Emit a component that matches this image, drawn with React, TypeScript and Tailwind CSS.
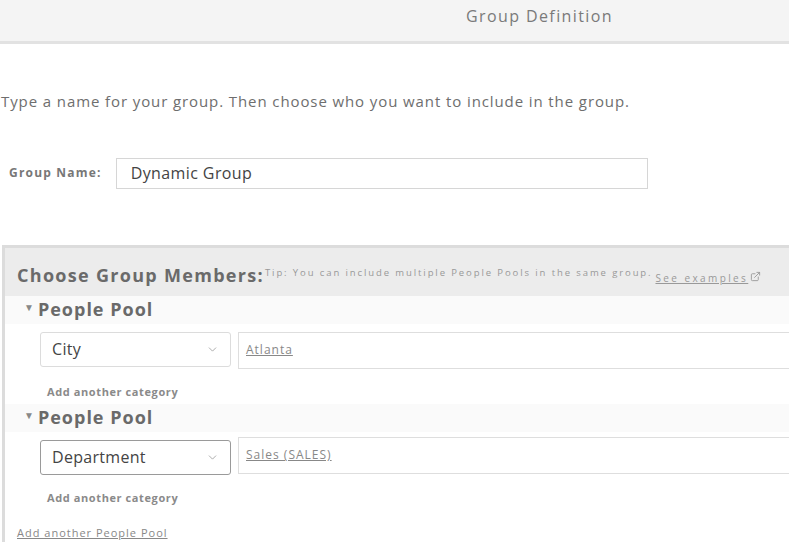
import { ChevronDown, ExternalLink } from 'lucide-react';

function PoolRow({ category, value, focused }: { category: string; value: string; focused?: boolean }) {
  return (
    <div>
      <div className="flex items-center h-[28px] pl-[19px] bg-[#fafafa]">
        <span className="text-[10px] text-[#888] mr-[4px] mt-[-4px]">▼</span>
        <span className="text-[18px] font-bold text-[#6a6a6a] tracking-[1px]">People Pool</span>
      </div>
      <div className="flex items-start bg-white pt-[8px]">
        <div
          className={`ml-[35px] w-[191px] h-[35px] flex items-center justify-between px-[11px] bg-white rounded-[3px] border ${
            focused ? 'border-[#9a9a9a]' : 'border-[#dcdcdc]'
          }`}
        >
          <span className="text-[16px] text-[#444] tracking-[0.3px]">{category}</span>
          <ChevronDown className="w-[13px] h-[13px] text-[#999]" strokeWidth={1.5} />
        </div>
        <div className={`ml-[7px] flex-1 h-[37px] flex items-center pl-[7px] border border-r-0 border-[#dedede] bg-white ${focused ? 'mt-[-3px]' : ''}`}>
          <span className="text-[12px] text-[#888] underline tracking-[1px]">{value}</span>
        </div>
      </div>
      <div className="bg-white pl-[42px] h-[35px] flex items-end pb-[3px]">
        <span className="text-[11px] font-bold text-[#8a8a8a] tracking-[0.6px]">Add another category</span>
      </div>
    </div>
  );
}

export default function App() {
  return (
    <div className="w-[789px] h-[542px] overflow-hidden bg-white" style={{ fontFamily: '"Open Sans", "Liberation Sans", sans-serif' }}>
      {/* Header */}
      <div className="h-[44px] bg-[#f4f4f4] border-b-[3px] border-[#e2e2e2] flex items-center pl-[466px] pb-[9px]">
        <span className="text-[16px] text-[#7a7a7a] tracking-[1.4px]">Group Definition</span>
      </div>

      <p className="mt-[46px] pl-[1px] text-[15px] text-[#6e6e6e] tracking-[0.9px]">
        Type a name for your group. Then choose who you want to include in the group.
      </p>

      <div className="mt-[45px] flex items-center">
        <span className="ml-[9px] text-[12px] font-bold text-[#777] tracking-[1.2px]">Group Name:</span>
        <div className="ml-[14px] w-[532px] h-[31px] border border-[#d6d6d6] bg-white flex items-center pl-[14px]">
          <span className="text-[16px] text-[#444] tracking-[0.4px]">Dynamic Group</span>
        </div>
      </div>

      {/* Members panel */}
      <div className="mt-[56px] ml-[2px] border-l-[3px] border-t-[3px] border-[#dcdcdc] bg-white">
        <div className="h-[48px] bg-[#ececec] flex items-center pl-[12px] pt-[8px]">
          <span className="text-[18px] font-bold text-[#6a6a6a] tracking-[1.3px]">Choose Group Members:</span>
          <span className="self-start mt-[10px] text-[9.5px] text-[#999] ml-[1px] tracking-[1.9px] whitespace-nowrap">
            Tip: You can include multiple People Pools in the same group.
          </span>
          <span className="ml-[3px] text-[10px] text-[#999] underline mt-[6px] tracking-[2.4px] whitespace-nowrap">See examples</span>
          <ExternalLink className="ml-[2px] w-[11px] h-[11px] text-[#999] mt-[2px] shrink-0" />
        </div>
        <PoolRow category="City" value="Atlanta" />
        <PoolRow category="Department" value="Sales (SALES)" focused />
        <div className="bg-white pl-[12px] h-[40px] pt-[9px]">
          <span className="text-[11px] text-[#888] underline tracking-[1px]">Add another People Pool</span>
        </div>
      </div>
    </div>
  );
}
